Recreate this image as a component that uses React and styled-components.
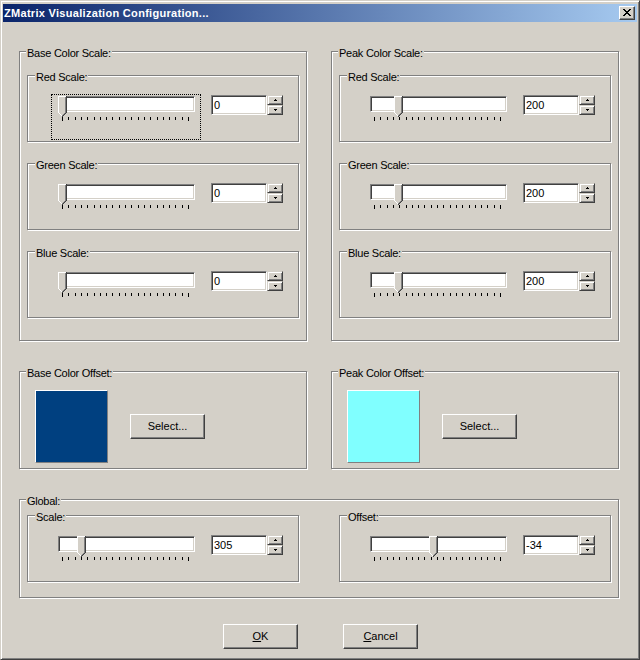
import React from 'react';
import styled, { createGlobalStyle } from 'styled-components';

const GlobalStyle = createGlobalStyle`
  html, body { margin: 0; padding: 0; background: #d4d0c8; }
  body {
    font-family: "Liberation Sans", Arial, sans-serif;
    font-size: 11px;
    color: #000;
  }
`;

const Window = styled.div`
  box-sizing: border-box;
  width: 640px;
  height: 660px;
  background: #d4d0c8;
  border: 1px solid;
  border-color: #d4d0c8 #404040 #404040 #d4d0c8;
  box-shadow: inset 1px 1px 0 #fff, inset -1px -1px 0 #808080;
  padding: 3px 2px 2px 2px;
  display: flex;
  flex-direction: column;
`;

const TitleBar = styled.div`
  flex: none;
  height: 18px;
  display: flex;
  align-items: center;
  justify-content: space-between;
  padding: 0 2px 0 1px;
  background: linear-gradient(to right, #0a246a, #a6caf0);
`;

const TitleText = styled.div`
  color: #fff;
  font-weight: bold;
  font-size: 11px;
  line-height: 18px;
  letter-spacing: 0.3px;
  white-space: nowrap;
`;

const CloseButton = styled.div`
  box-sizing: border-box;
  width: 16px;
  height: 14px;
  background: #d4d0c8;
  border: 1px solid;
  border-color: #fff #404040 #404040 #fff;
  box-shadow: inset -1px -1px 0 #808080;
  display: flex;
  align-items: center;
  justify-content: center;
  padding: 0 1px 1px 0;
`;

const Body = styled.div`
  display: flex;
  flex-direction: column;
  padding: 29px 18px 0 16px;
`;

const Row = styled.div`
  display: flex;
  gap: 24px;
  margin-top: ${p => p.$mt || 0}px;
`;

const GroupBox = styled.div`
  box-sizing: border-box;
  display: flex;
  flex-direction: column;
  flex: none;
  width: ${p => p.$w}px;
  margin: ${p => p.$mt || 0}px 0 0 ${p => p.$ml || 0}px;
  padding-bottom: ${p => p.$pb || 0}px;
  border: 1px solid #808080;
  box-shadow: inset 1px 1px 0 #fff, 1px 1px 0 #fff;
`;

const Legend = styled.div`
  align-self: flex-start;
  margin: -5px 0 0 ${p => p.$indent}px;
  padding: 0 1px;
  height: 13px;
  line-height: 13px;
  background: #d4d0c8;
  letter-spacing: -0.25px;
  white-space: nowrap;
`;

const InnerRow = styled.div`
  display: flex;
  gap: 40px;
  margin: 7px 0 0 7px;
`;

const SliderRow = styled.div`
  display: flex;
  align-items: flex-start;
  margin: 10px 0 0 23px;
`;

const SliderBox = styled.div`
  position: relative;
  box-sizing: border-box;
  width: 150px;
  height: 46px;
  border: 1px dotted ${p => (p.$focused ? '#000' : 'transparent')};
`;

const Track = styled.div`
  box-sizing: border-box;
  width: 137px;
  height: 16px;
  margin: 1px 0 0 6px;
  background: #fff;
  border: 1px solid;
  border-color: #808080 #fff #fff #808080;
  box-shadow: inset 1px 1px 0 #404040, inset -1px -1px 0 #d4d0c8;
`;

const Ticks = styled.svg`
  display: block;
  margin-top: 5px;
`;

const Thumb = styled.svg`
  position: absolute;
  top: 1px;
  display: block;
`;

const SpinEdit = styled.div`
  display: flex;
  margin: 1px 0 0 10px;
`;

const Edit = styled.div`
  box-sizing: border-box;
  width: 56px;
  height: 20px;
  background: #fff;
  border: 1px solid;
  border-color: #808080 #fff #fff #808080;
  box-shadow: inset 1px 1px 0 #404040, inset -1px -1px 0 #d4d0c8;
  padding-left: 2px;
  line-height: 18px;
  white-space: nowrap;
`;

const Spin = styled.div`
  display: flex;
  flex-direction: column;
  width: 16px;
  height: 20px;
`;

const SpinButton = styled.div`
  box-sizing: border-box;
  height: 10px;
  background: #d4d0c8;
  border: 1px solid;
  border-color: #d4d0c8 #404040 #404040 #d4d0c8;
  box-shadow: inset 1px 1px 0 #fff, inset -1px -1px 0 #808080;
  display: flex;
  align-items: center;
  justify-content: center;
`;

const SwatchRow = styled.div`
  display: flex;
  align-items: center;
  margin: 10px 0 0 15px;
`;

const Swatch = styled.div`
  box-sizing: border-box;
  width: 73px;
  height: 73px;
  background: ${p => p.$color};
  border: 1px solid;
  border-color: #fff #808080 #808080 #fff;
`;

const PushButton = styled.div`
  box-sizing: border-box;
  flex: none;
  width: 75px;
  height: 25px;
  margin-left: ${p => p.$ml || 0}px;
  background: #d4d0c8;
  border: 1px solid;
  border-color: #fff #404040 #404040 #fff;
  box-shadow: inset -1px -1px 0 #808080;
  display: flex;
  align-items: center;
  justify-content: center;
  white-space: nowrap;
  padding-bottom: 1px;
  & u { text-decoration-thickness: 1px; text-underline-offset: 1px; }
`;

const ButtonRow = styled.div`
  display: flex;
  justify-content: center;
  gap: 45px;
  margin-top: 26px;
  padding-left: 3px;
`;

/* ---------- drawings ---------- */

const px = (list, color) =>
  list.map(([x, y, w = 1, h = 1], i) => (
    <rect key={color + i} x={x} y={y} width={w} height={h} fill={color} />
  ));

function ThumbIcon({ left }) {
  const fill = [[0, 0, 9, 17], [1, 17, 7, 1], [2, 18, 5, 1], [3, 19, 3, 1], [4, 20, 1, 1]];
  const white = [[0, 0, 8, 1], [0, 0, 1, 17], [1, 17], [2, 18], [3, 19]];
  const gray = [[7, 1, 1, 16], [6, 17], [5, 18], [4, 19]];
  const dark = [[8, 0, 1, 17], [7, 17], [6, 18], [5, 19], [4, 20]];
  return (
    <Thumb width="9" height="21" shapeRendering="crispEdges" style={{ left }}>
      {px(fill, '#d4d0c8')}
      {px(white, '#ffffff')}
      {px(gray, '#808080')}
      {px(dark, '#404040')}
    </Thumb>
  );
}

function TickMarks() {
  const ticks = [];
  for (let i = 0; i <= 20; i++) {
    const x = 10 + Math.round(i * 6.3);
    const h = i === 0 || i === 20 ? 4 : 3;
    ticks.push(<rect key={i} x={x} y={0} width={1} height={h} fill="#000" />);
  }
  return (
    <Ticks width="148" height="4" shapeRendering="crispEdges">
      {ticks}
    </Ticks>
  );
}

function Arrow({ up }) {
  const rows = up ? [[1, 0, 1, 1], [0, 1, 3, 1]] : [[0, 0, 3, 1], [1, 1, 1, 1]];
  return (
    <svg width="3" height="2" shapeRendering="crispEdges" style={{ display: 'block' }}>
      {px(rows, '#000')}
    </svg>
  );
}

function CloseGlyph() {
  const rows = [
    [0, 0, 2, 1], [6, 0, 2, 1],
    [1, 1, 2, 1], [5, 1, 2, 1],
    [2, 2, 4, 1],
    [3, 3, 2, 1],
    [2, 4, 4, 1],
    [1, 5, 2, 1], [5, 5, 2, 1],
    [0, 6, 2, 1], [6, 6, 2, 1],
  ];
  return (
    <svg width="8" height="7" shapeRendering="crispEdges" style={{ display: 'block' }}>
      {px(rows, '#000')}
    </svg>
  );
}

/* ---------- composite parts ---------- */

function Slider({ off, focused }) {
  return (
    <SliderBox $focused={focused}>
      <Track />
      <TickMarks />
      <ThumbIcon left={6 + off} />
    </SliderBox>
  );
}

function SpinField({ value }) {
  return (
    <SpinEdit>
      <Edit>{value}</Edit>
      <Spin>
        <SpinButton><Arrow up /></SpinButton>
        <SpinButton><Arrow /></SpinButton>
      </Spin>
    </SpinEdit>
  );
}

function SliderPanel({ label, value, off, focused, mt, ml }) {
  return (
    <GroupBox $w={272} $mt={mt} $ml={ml} $pb={1}>
      <Legend $indent={7}>{label}</Legend>
      <SliderRow>
        <Slider off={off} focused={focused} />
        <SpinField value={value} />
      </SliderRow>
    </GroupBox>
  );
}

function ScaleGroup({ title, items }) {
  return (
    <GroupBox $w={288} $pb={22}>
      <Legend $indent={6}>{title}</Legend>
      {items.map((it, i) => (
        <SliderPanel key={it.label} {...it} mt={i === 0 ? 15 : 21} ml={7} />
      ))}
    </GroupBox>
  );
}

function OffsetGroup({ title, color }) {
  return (
    <GroupBox $w={288} $pb={5}>
      <Legend $indent={6}>{title}</Legend>
      <SwatchRow>
        <Swatch $color={color} />
        <PushButton $ml={22}>Select...</PushButton>
      </SwatchRow>
    </GroupBox>
  );
}

const baseItems = [
  { label: 'Red Scale:', value: '0', off: 0, focused: true },
  { label: 'Green Scale:', value: '0', off: 0 },
  { label: 'Blue Scale:', value: '0', off: 0 },
];

const peakItems = [
  { label: 'Red Scale:', value: '200', off: 24 },
  { label: 'Green Scale:', value: '200', off: 24 },
  { label: 'Blue Scale:', value: '200', off: 24 },
];

export default function App() {
  return (
    <>
      <GlobalStyle />
      <Window>
        <TitleBar>
          <TitleText>ZMatrix Visualization Configuration...</TitleText>
          <CloseButton><CloseGlyph /></CloseButton>
        </TitleBar>
        <Body>
          <Row>
            <ScaleGroup title="Base Color Scale:" items={baseItems} />
            <ScaleGroup title="Peak Color Scale:" items={peakItems} />
          </Row>
          <Row $mt={30}>
            <OffsetGroup title="Base Color Offset:" color="#004080" />
            <OffsetGroup title="Peak Color Offset:" color="#80ffff" />
          </Row>
          <Row $mt={30}>
            <GroupBox $w={600} $pb={15}>
              <Legend $indent={6}>Global:</Legend>
              <InnerRow>
                <SliderPanel label="Scale:" value="305" off={19} />
                <SliderPanel label="Offset:" value="-34" off={59} />
              </InnerRow>
            </GroupBox>
          </Row>
          <ButtonRow>
            <PushButton><span><u>O</u>K</span></PushButton>
            <PushButton><span><u>C</u>ancel</span></PushButton>
          </ButtonRow>
        </Body>
      </Window>
    </>
  );
}
